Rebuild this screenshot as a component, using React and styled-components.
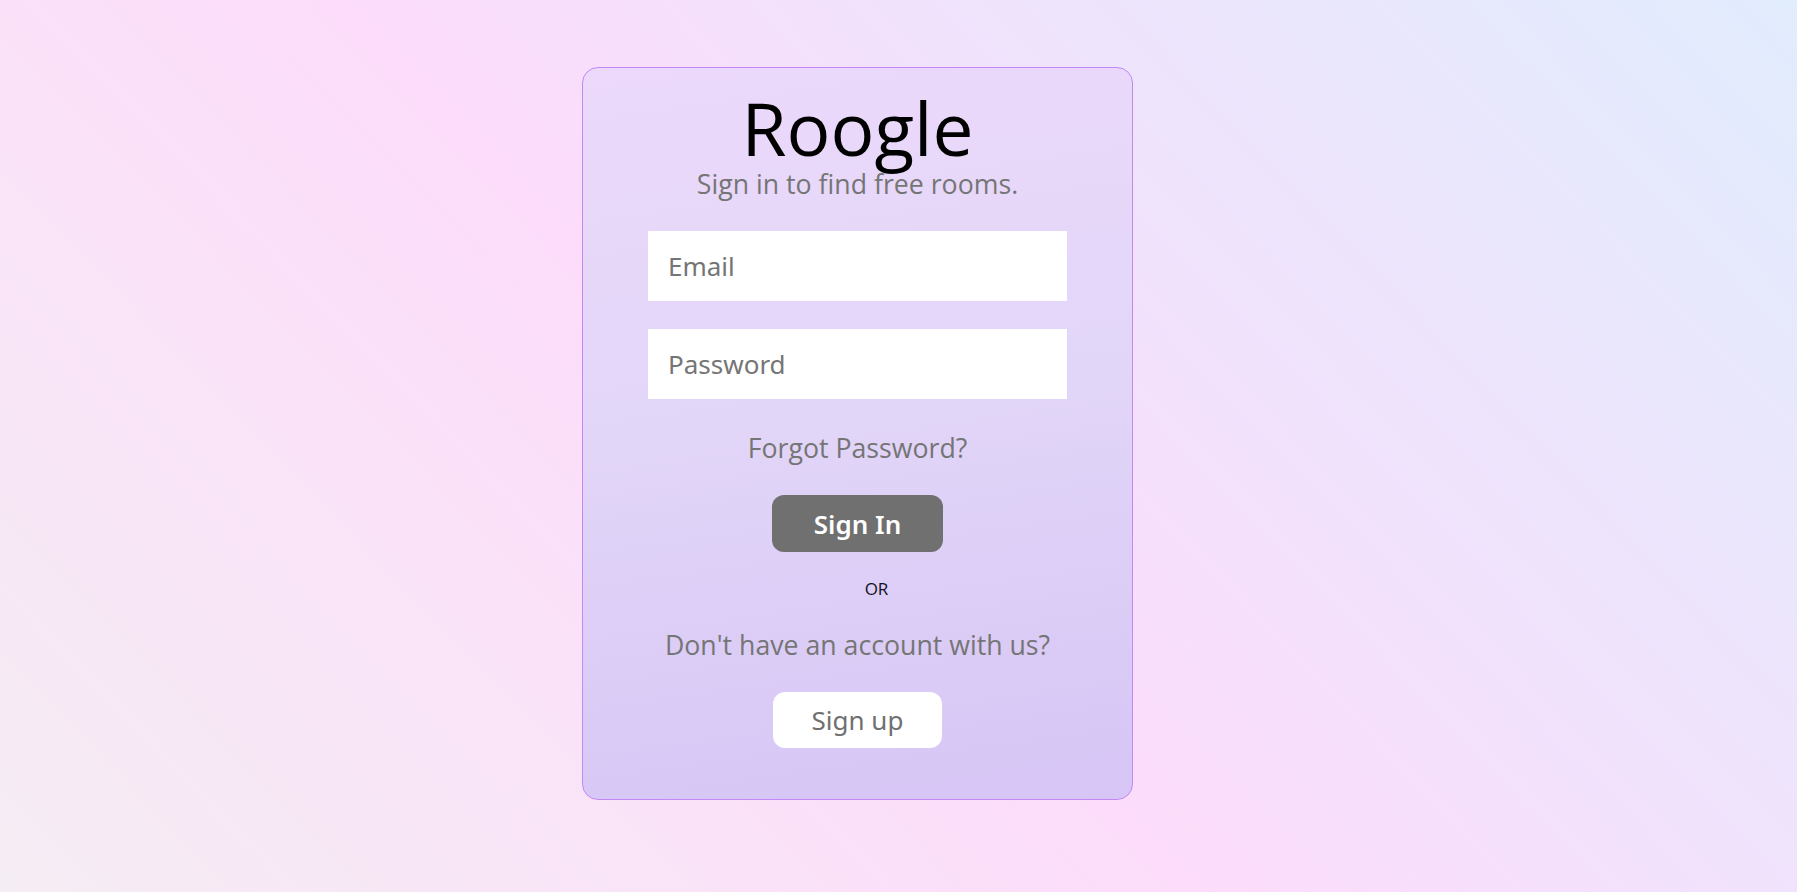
import React from "react";
import styled, { createGlobalStyle } from "styled-components";

const GlobalStyle = createGlobalStyle`
  html, body {
    margin: 0;
    padding: 0;
  }
  body {
    font-family: "Open Sans", "Noto Sans", sans-serif;
    background: linear-gradient(46deg, #f5edf4 0%, #fcdcfa 45%, #f1e2fc 66%, #e1ecfd 100%);
    background-attachment: fixed;
    min-height: 100vh;
  }
`;

const Page = styled.div`
  min-height: 100vh;
  box-sizing: border-box;
  padding: 67px 0 0 582px;
`;

const Card = styled.div`
  width: 551px;
  box-sizing: border-box;
  display: flex;
  flex-direction: column;
  align-items: center;
  padding: 21px 0 51px;
  border: 1px solid #c487f7;
  border-radius: 16px;
  background: linear-gradient(172deg, #ecd9fb 0%, #e2d6f8 45%, #d6c5f5 100%);
`;

const Title = styled.h1`
  margin: 0;
  font-family: "Open Sans", sans-serif;
  font-weight: 400;
  font-size: 73px;
  line-height: 78px;
  color: #000;
`;

const Muted = styled.p`
  margin: ${(p) => p.$top}px 0 0;
  font-family: "Open Sans", sans-serif;
  font-size: 26.7px;
  line-height: 30px;
  color: #757575;
  cursor: ${(p) => (p.$link ? "pointer" : "default")};
`;

const Input = styled.input`
  display: block;
  width: 419px;
  height: 70px;
  margin-top: ${(p) => p.$top}px;
  box-sizing: border-box;
  padding: 0 20px;
  border: none;
  outline: none;
  background: #fff;
  font-family: "Comic Sans MS", "Noto Sans", sans-serif;
  font-size: 26px;
  color: #333;
  &::placeholder {
    color: #757575;
  }
`;

const Button = styled.button`
  width: ${(p) => (p.$light ? 169 : 171)}px;
  height: ${(p) => (p.$light ? 56 : 57)}px;
  margin-top: 32px;
  border: none;
  border-radius: 12px;
  background: ${(p) => (p.$light ? "#ffffff" : "#707070")};
  color: ${(p) => (p.$light ? "#707070" : "#ffffff")};
  font-family: "Comic Sans MS", "Noto Sans", sans-serif;
  font-size: 26px;
  font-weight: ${(p) => (p.$light ? 400 : 600)};
  cursor: pointer;
`;

const Or = styled.p`
  margin: 27px 0 0 38px;
  font-family: "Open Sans", sans-serif;
  font-size: 17px;
  line-height: 20px;
  color: #111122;
`;

export default function App() {
  return (
    <>
      <GlobalStyle />
      <Page>
        <Card>
          <Title>Roogle</Title>
          <Muted $top={2}>Sign in to find free rooms.</Muted>
          <Input $top={32} type="email" placeholder="Email" />
          <Input $top={28} type="password" placeholder="Password" />
          <Muted $top={34} $link>Forgot Password?</Muted>
          <Button>Sign In</Button>
          <Or>OR</Or>
          <Muted $top={31}>Don't have an account with us?</Muted>
          <Button $light>Sign up</Button>
        </Card>
      </Page>
    </>
  );
}
